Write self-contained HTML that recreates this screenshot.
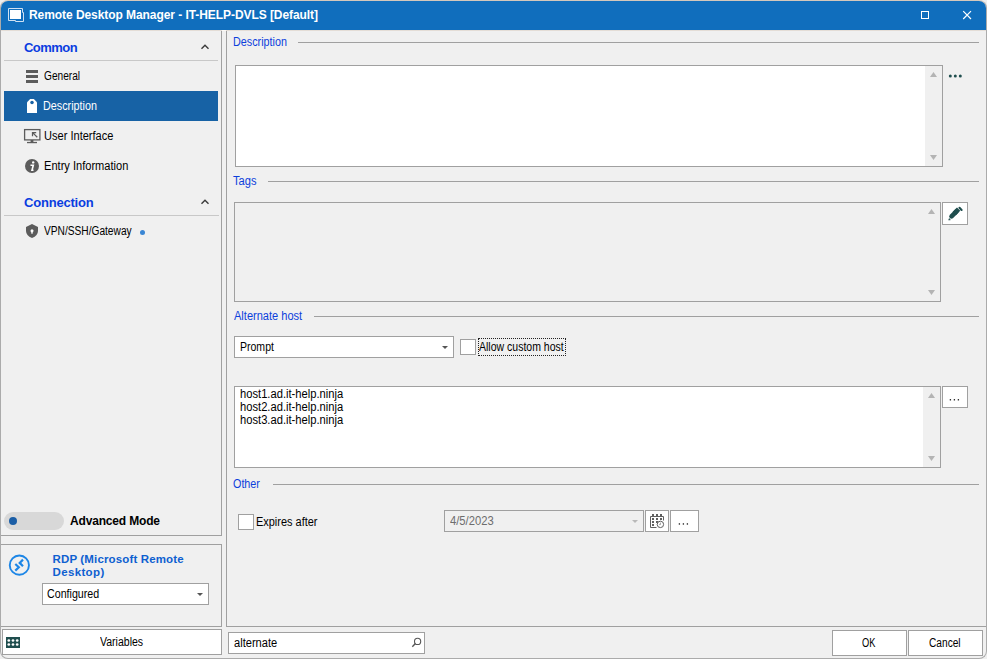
<!DOCTYPE html>
<html><head><meta charset="utf-8">
<style>
*{box-sizing:border-box;margin:0;padding:0}
html,body{width:987px;height:659px;overflow:hidden;background:#efefef}
body{font-family:"Liberation Sans",sans-serif;font-size:11px;color:#000;position:relative}
.a{position:absolute}
.t{position:absolute;white-space:pre;line-height:20px;transform-origin:0 0}
svg{position:absolute;left:0;top:0;overflow:visible}
</style></head><body>
<div class="a" style="left:0;top:0;width:987px;height:659px;background:#f0f0f0;border:1px solid #ababab;border-top:1px solid #d4c8bc;border-radius:8px;overflow:hidden">
<div class="a" style="left:-1px;top:0;width:987px;height:29px;background:#106ebd"></div>
</div>
<div class="a" style="left:1px;top:30px;width:985px;height:1px;background:#e4ddd6;"></div>
<div class="a" style="left:222px;top:30px;width:4px;height:1px;background:#fbf8f4;"></div>
<div class="a" style="left:221px;top:31px;width:1px;height:505px;background:#a0a0a0;"></div>
<div class="a" style="left:1px;top:535px;width:221px;height:1px;background:#a0a0a0;"></div>
<div class="a" style="left:1px;top:544px;width:221px;height:1px;background:#a0a0a0;"></div>
<div class="a" style="left:221px;top:544px;width:1px;height:83px;background:#a0a0a0;"></div>
<div class="a" style="left:1px;top:626px;width:221px;height:1px;background:#a0a0a0;"></div>
<div class="a" style="left:2px;top:629px;width:220px;height:26px;background:#fff;border:1px solid #a0a0a0;"></div>
<div class="a" style="left:226px;top:31px;width:1px;height:596px;background:#a0a0a0;"></div>
<div class="a" style="left:226px;top:626px;width:760px;height:1px;background:#a0a0a0;"></div>
<div class="a" style="left:4px;top:60px;width:214px;height:1px;background:#c8c8c8;"></div>
<div class="a" style="left:4px;top:215px;width:215px;height:1px;background:#c8c8c8;"></div>
<div class="a" style="left:4px;top:91px;width:214px;height:30px;background:#1762a5;"></div>
<div class="a" style="left:4px;top:512px;width:60px;height:18px;border-radius:9px;background:#d8d8d8"></div>
<div class="a" style="left:9px;top:517px;width:8px;height:8px;border-radius:4px;background:#1b5ea6"></div>
<div class="a" style="left:140px;top:229.5px;width:5px;height:5px;border-radius:2.5px;background:#3a86d4"></div>
<div class="a" style="left:42px;top:583px;width:167px;height:22px;background:#fff;border:1px solid #a0a0a0;"></div>
<div class="a" style="left:298px;top:42px;width:681px;height:1px;background:#a0a0a0;"></div>
<div class="a" style="left:268px;top:181px;width:711px;height:1px;background:#a0a0a0;"></div>
<div class="a" style="left:314px;top:316px;width:665px;height:1px;background:#a0a0a0;"></div>
<div class="a" style="left:273px;top:484px;width:706px;height:1px;background:#a0a0a0;"></div>
<div class="a" style="left:235px;top:65px;width:708px;height:102px;background:#fff;border:1px solid #a0a0a0;"></div>
<div class="a" style="left:925px;top:66px;width:17px;height:100px;background:#f0f0f0;"></div>
<div class="a" style="left:234px;top:202px;width:707px;height:100px;background:#f0f0f0;border:1px solid #a0a0a0;"></div>
<div class="a" style="left:942px;top:202px;width:26px;height:23px;background:#fff;border:1px solid #a0a0a0;"></div>
<div class="a" style="left:234px;top:336px;width:220px;height:22px;background:#fff;border:1px solid #a0a0a0;"></div>
<div class="a" style="left:460px;top:339px;width:16px;height:16px;background:#fff;border:1px solid #a0a0a0;"></div>
<div class="a" style="left:478px;top:338px;width:88px;height:18px;border:1px dotted #222"></div>
<div class="a" style="left:234px;top:386px;width:707px;height:82px;background:#fff;border:1px solid #a0a0a0;"></div>
<div class="a" style="left:923px;top:387px;width:17px;height:80px;background:#f0f0f0;"></div>
<div class="a" style="left:942px;top:386px;width:26px;height:22px;background:#fff;border:1px solid #a0a0a0;"></div>
<div class="a" style="left:238px;top:514px;width:16px;height:16px;background:#fff;border:1px solid #a0a0a0;"></div>
<div class="a" style="left:444px;top:510px;width:200px;height:22px;background:#f0f0f0;border:1px solid #a0a0a0;"></div>
<div class="a" style="left:645px;top:510px;width:24px;height:22px;background:#fff;border:1px solid #a0a0a0;"></div>
<div class="a" style="left:670px;top:510px;width:29px;height:22px;background:#fff;border:1px solid #a0a0a0;"></div>
<div class="a" style="left:228px;top:632px;width:197px;height:22px;background:#fff;border:1px solid #a0a0a0;"></div>
<div class="a" style="left:832px;top:630px;width:75px;height:26px;background:#fff;border:1px solid #a0a0a0;"></div>
<div class="a" style="left:908px;top:630px;width:75px;height:26px;background:#fff;border:1px solid #a0a0a0;"></div>
<svg width="987" height="659" viewBox="0 0 987 659"><path d="M8.5 8.5H22.5V12.5H23.5V21.5H15.5V20.5H8.5Z" fill="none" stroke="#cfe1f3" stroke-width="1"/><rect x="10" y="10" width="11" height="9" fill="#fff"/><rect x="921.5" y="11.5" width="7" height="7" fill="none" stroke="#fff" stroke-width="1"/><path d="M963.2 11.2L971 19M971 11.2L963.2 19" stroke="#fff" stroke-width="1.2"/><path d="M201.5 48.8L205 45.3L208.5 48.8" fill="none" stroke="#3a3a3a" stroke-width="1.4"/><path d="M201.5 203.8L205 200.3L208.5 203.8" fill="none" stroke="#3a3a3a" stroke-width="1.4"/><rect x="26" y="70" width="12" height="3" fill="#5c5c5c"/><rect x="26" y="75" width="12" height="3" fill="#5c5c5c"/><rect x="26" y="80" width="12" height="3" fill="#5c5c5c"/><path d="M27 102.3L30.2 99H33.8L37 102.3V113H27Z" fill="#fff"/><circle cx="32" cy="102.6" r="1.75" fill="#1762a5"/><rect x="24.6" y="129.6" width="15.3" height="10.3" fill="none" stroke="#5c5c5c" stroke-width="1.3"/><rect x="30.6" y="140" width="2.8" height="2" fill="#5c5c5c"/><rect x="27" y="141.9" width="10" height="1.3" fill="#5c5c5c"/><path d="M37.3 137.3L32.6 132.6M32.5 136.2V132.5H36.2" fill="none" stroke="#5c5c5c" stroke-width="1.25"/><circle cx="32" cy="166" r="7" fill="#5c5c5c"/><circle cx="33.2" cy="162.4" r="1.2" fill="#fff"/><path d="M30.5 165.3H33.3L32 170.2H33.5" fill="none" stroke="#fff" stroke-width="1.6"/><path d="M32 224L38 227V231Q38 235.5 32 238Q26 235.5 26 231V227Z" fill="#5c5c5c"/><circle cx="32" cy="230.7" r="1.5" fill="#fff"/><rect x="31.3" y="231" width="1.4" height="2.7" fill="#fff"/><circle cx="19.35" cy="565.15" r="9.6" fill="none" stroke="#1d86e6" stroke-width="1.9"/><path d="M15.3 564L18.8 567.3L15.3 570.6M23 559.6L19.7 562.9L23 566.2" fill="none" stroke="#1d86e6" stroke-width="2.2"/><path d="M197 593H203L200 596Z" fill="#555"/><path d="M442 346H448L445 349Z" fill="#555"/><path d="M632 520H638L635 523Z" fill="#b9b9b9"/><path d="M930 77H937L933.5 72Z" fill="#b4b4b4"/><path d="M930 155H937L933.5 160Z" fill="#b4b4b4"/><path d="M928 214H935L931.5 209Z" fill="#b4b4b4"/><path d="M928 290H935L931.5 295Z" fill="#b4b4b4"/><path d="M928 398H935L931.5 393Z" fill="#b4b4b4"/><path d="M928 456H935L931.5 461Z" fill="#b4b4b4"/><circle cx="950.3" cy="76" r="1.5" fill="#1f4e4e"/><circle cx="955.3" cy="76" r="1.5" fill="#1f4e4e"/><circle cx="960.3" cy="76" r="1.5" fill="#1f4e4e"/><rect x="949.75" y="399" width="1.3" height="1.5" fill="#333"/><rect x="953.75" y="399" width="1.3" height="1.5" fill="#333"/><rect x="957.75" y="399" width="1.3" height="1.5" fill="#333"/><rect x="678.75" y="523.2" width="1.3" height="1.5" fill="#333"/><rect x="682.75" y="523.2" width="1.3" height="1.5" fill="#333"/><rect x="686.75" y="523.2" width="1.3" height="1.5" fill="#333"/><g transform="translate(0.3,0.9)"><path d="M951.2 215.4L956.2 210.4" stroke="#1f4e4e" stroke-width="4.6" stroke-linecap="round"/><path d="M954 212.6L958.3 208.3" stroke="#1f4e4e" stroke-width="4.6"/><path d="M959.2 206.9L961.3 209" stroke="#1f4e4e" stroke-width="2.1" stroke-linecap="round"/><path d="M948.4 219.2L948.9 217.6L950.1 218.8Z" fill="#1f4e4e" stroke="#1f4e4e" stroke-width="0.6" stroke-linejoin="round"/></g><rect x="6" y="637" width="14" height="11" fill="#1f4e4e"/><circle cx="8.8" cy="640.5" r="1.35" fill="#fff"/><circle cx="13" cy="640.5" r="1.35" fill="#fff"/><circle cx="17.2" cy="640.5" r="1.35" fill="#fff"/><circle cx="8.8" cy="644.5" r="1.35" fill="#fff"/><circle cx="13" cy="644.5" r="1.35" fill="#fff"/><circle cx="17.2" cy="644.5" r="1.35" fill="#fff"/><path d="M656.5 527.5H650.5V516.5H663.5V520.5" fill="none" stroke="#606060" stroke-width="1"/><rect x="652" y="514" width="2" height="2" fill="#606060"/><rect x="656" y="514" width="2" height="2" fill="#606060"/><rect x="660" y="514" width="2" height="2" fill="#606060"/><rect x="652" y="518" width="2" height="2" fill="#606060"/><rect x="656" y="518" width="2" height="2" fill="#606060"/><rect x="660" y="518" width="2" height="2" fill="#606060"/><rect x="652" y="521" width="2" height="2" fill="#606060"/><rect x="656" y="521" width="2" height="2" fill="#606060"/><rect x="652" y="524" width="2" height="2" fill="#606060"/><circle cx="660.4" cy="524.4" r="3.2" fill="#fff" stroke="#606060" stroke-width="1"/><path d="M660.4 522.6V524.6H659.2" fill="none" stroke="#606060" stroke-width="0.6"/><circle cx="417.6" cy="641.4" r="3.1" fill="none" stroke="#555" stroke-width="1.1"/><path d="M415.4 643.6L412.3 646.7" stroke="#555" stroke-width="1.4"/></svg>
<div class="t" style="left:29.0px;top:5.0px;font-size:12px;font-weight:bold;color:#fff;letter-spacing:-0.065px">Remote Desktop Manager - IT-HELP-DVLS [Default]</div>
<div class="t" style="left:24.0px;top:38.0px;font-size:13px;font-weight:bold;color:#0a3de0;letter-spacing:-0.520px">Common</div>
<div class="t" style="left:44.0px;top:66.0px;font-size:12px;color:#000;transform:scaleX(0.8451)">General</div>
<div class="t" style="left:43.3px;top:96.0px;font-size:12px;color:#fff;transform:scaleX(0.8979)">Description</div>
<div class="t" style="left:44.0px;top:126.0px;font-size:12px;color:#000;transform:scaleX(0.9212)">User Interface</div>
<div class="t" style="left:44.0px;top:156.0px;font-size:12px;color:#000;transform:scaleX(0.9232)">Entry Information</div>
<div class="t" style="left:24.0px;top:192.5px;font-size:13px;font-weight:bold;color:#0a3de0;letter-spacing:-0.200px">Connection</div>
<div class="t" style="left:44.0px;top:221.0px;font-size:12px;color:#000;transform:scaleX(0.8476)">VPN/SSH/Gateway</div>
<div class="t" style="left:70.0px;top:511.0px;font-size:12px;font-weight:bold;color:#000;letter-spacing:-0.167px">Advanced Mode</div>
<div class="t" style="left:52.5px;top:549.0px;font-size:11.5px;font-weight:bold;color:#0e60d0;letter-spacing:0.145px">RDP (Microsoft Remote</div>
<div class="t" style="left:52.5px;top:562.0px;font-size:11.5px;font-weight:bold;color:#0e60d0;letter-spacing:0.360px">Desktop)</div>
<div class="t" style="left:47.4px;top:583.7px;font-size:12px;color:#000;transform:scaleX(0.8883)">Configured</div>
<div class="t" style="left:99.5px;top:631.7px;font-size:12px;color:#000;transform:scaleX(0.8776)">Variables</div>
<div class="t" style="left:232.8px;top:32.0px;font-size:12px;color:#0c3fdc;transform:scaleX(0.8979)">Description</div>
<div class="t" style="left:232.9px;top:170.8px;font-size:12px;color:#0c3fdc;transform:scaleX(0.9267)">Tags</div>
<div class="t" style="left:234.0px;top:305.7px;font-size:12px;color:#0c3fdc;transform:scaleX(0.9199)">Alternate host</div>
<div class="t" style="left:239.5px;top:336.5px;font-size:12px;color:#000;transform:scaleX(0.8768)">Prompt</div>
<div class="t" style="left:479.2px;top:337.0px;font-size:12px;color:#000;transform:scaleX(0.8760)">Allow custom host</div>
<div class="t" style="left:240.0px;top:383.8px;font-size:12px;color:#000;transform:scaleX(0.9315)">host1.ad.it-help.ninja</div>
<div class="t" style="left:240.0px;top:397.0px;font-size:12px;color:#000;transform:scaleX(0.9315)">host2.ad.it-help.ninja</div>
<div class="t" style="left:240.0px;top:410.0px;font-size:12px;color:#000;transform:scaleX(0.9315)">host3.ad.it-help.ninja</div>
<div class="t" style="left:233.4px;top:473.5px;font-size:12px;color:#0c3fdc;transform:scaleX(0.8978)">Other</div>
<div class="t" style="left:256.0px;top:511.8px;font-size:12px;color:#000;transform:scaleX(0.9125)">Expires after</div>
<div class="t" style="left:450.0px;top:511.0px;font-size:12px;color:#6d6d6d;transform:scaleX(0.9365)">4/5/2023</div>
<div class="t" style="left:234.0px;top:632.7px;font-size:12px;color:#000;transform:scaleX(0.9250)">alternate</div>
<div class="t" style="left:862.0px;top:633.0px;font-size:12px;color:#000;transform:scaleX(0.7702)">OK</div>
<div class="t" style="left:928.8px;top:633.0px;font-size:12px;color:#000;transform:scaleX(0.8466)">Cancel</div>
</body></html>
